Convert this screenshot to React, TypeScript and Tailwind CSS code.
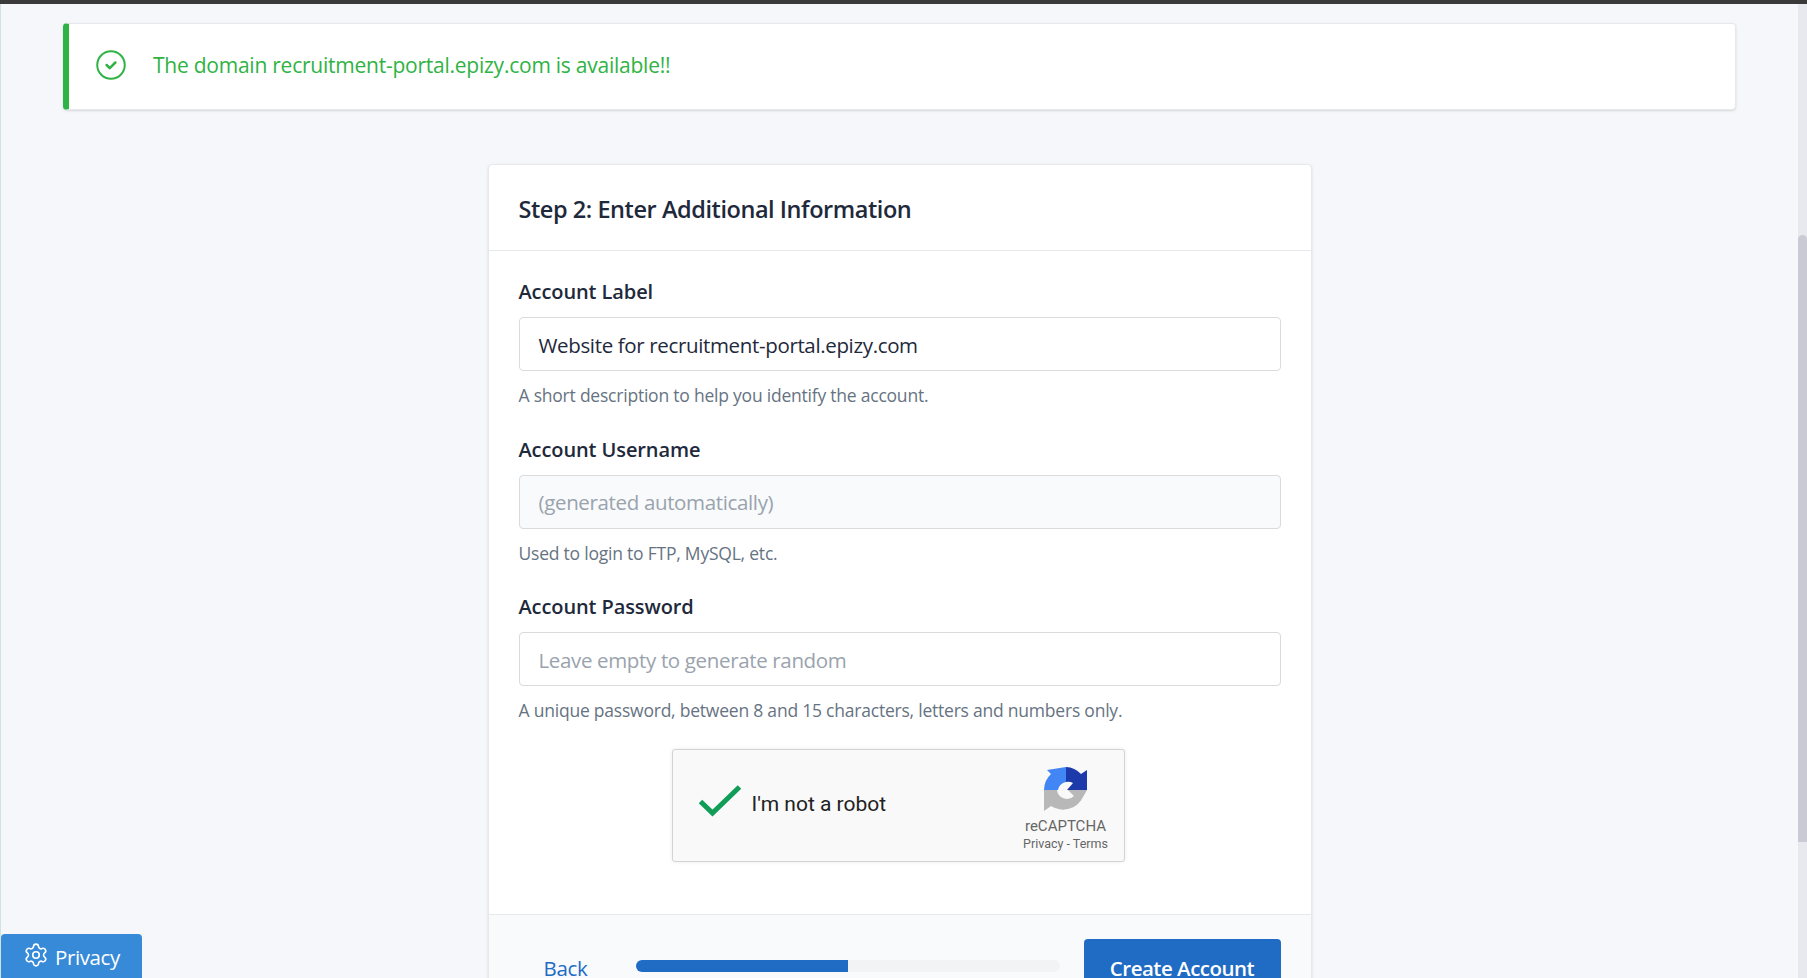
import { Settings } from 'lucide-react';

const font = "[font-family:'Open_Sans','Noto_Sans',sans-serif]";

function Field({ label, help, value, placeholder, disabled }: { label: string; help: string; value?: string; placeholder?: string; disabled?: boolean }) {
  return (
    <div className="mb-[31.5px]">
      <label className="block text-[20px] leading-[24px] font-semibold text-[#1e293b] tracking-[-0.1px] mb-[13px]">{label}</label>
      <div className={`h-[54px] rounded-[4px] border border-[#d9dbde] px-[19px] pt-[2px] flex items-center text-[20.5px] tracking-[-0.35px] ${disabled ? 'bg-[#f8fafc]' : 'bg-white'} ${value ? 'text-[#1e293b]' : 'text-[#9aa3ad]'}`}>
        {value ?? placeholder}
      </div>
      <p className="mt-[13px] text-[17.5px] leading-[22px] text-[#667382] tracking-[-0.22px]">{help}</p>
    </div>
  );
}

function RecaptchaLogo() {
  return (
    <svg viewBox="0 0 44 45" className="w-[44px] h-[45px]">
      <path d="M0 23 A22 22 0 0 1 7 7 L3 3 L22 0 L22 15 A10 10 0 0 0 14 23 Z" fill="#4285f4" />
      <path d="M22 0 A22 22 0 0 1 37 7 L43 3 L43 23 L23 23 L29 16 A10 10 0 0 0 22 15 Z" fill="#1c3aa9" />
      <path d="M0 23 L13 23 A10 10 0 0 0 30 29 L24 23 L43 23 L39 30 A22 22 0 0 1 7 39 L0 44 Z" fill="#b8b8b8" />
    </svg>
  );
}

export default function App() {
  return (
    <div className={`relative h-[978px] overflow-hidden bg-[#f5f7fb] flex flex-col ${font}`}>
      <div className="h-[4px] shrink-0 bg-[#3a3a3a]" />
      <div className="flex flex-1 min-h-0">
        <div className="w-px shrink-0 bg-[#cfe3e3]" />
        <main className="flex-1 min-w-0 px-[62px] pt-[19px]">
          <div className="h-[87px] rounded-[4px] bg-white border border-[#e6e8ec] border-l-[6px] border-l-[#2fb344] shadow-sm flex items-center pl-[27px]">
            <svg viewBox="0 0 24 24" fill="none" stroke="#2fb344" strokeWidth="1.6" strokeLinecap="round" strokeLinejoin="round" className="w-[30px] h-[30px] mb-[3px]">
              <circle cx="12" cy="12" r="11" />
              <path d="M8.5 12l2.5 2.5 4.5-4.5" strokeWidth="2" />
            </svg>
            <span className="ml-[27px] mb-[1px] text-[21px] font-medium text-[#2fb344] tracking-[-0.24px]">The domain recruitment-portal.epizy.com is available!!</span>
          </div>

          <div className="mt-[54px] mx-auto w-[824px] rounded-[4px] bg-white border border-[#e6e8ec] shadow-sm">
            <div className="h-[86px] px-[30px] pt-[4px] flex items-center border-b border-[#e6e8ec]">
              <h2 className="text-[23.5px] font-semibold text-[#1e293b] tracking-[-0.44px]">Step 2: Enter Additional Information</h2>
            </div>
            <div className="px-[30px] pt-[29px]">
              <Field label="Account Label" value="Website for recruitment-portal.epizy.com" help="A short description to help you identify the account." />
              <Field label="Account Username" placeholder="(generated automatically)" disabled help="Used to login to FTP, MySQL, etc." />
              <Field label="Account Password" placeholder="Leave empty to generate random" help="A unique password, between 8 and 15 characters, letters and numbers only." />
              <div className="ml-[153px] mt-[-4px] w-[453px] h-[113px] rounded-[3px] border border-[#d3d3d3] bg-[#f9f9f9] shadow-[0_0_4px_rgba(0,0,0,0.08)] flex items-center [font-family:Roboto,sans-serif]">
                <svg viewBox="0 0 42 32" className="ml-[26px] mb-[9px] w-[42px] h-[32px]" fill="none" stroke="#0f9d58" strokeWidth="5">
                  <path d="M1.5 16.5 L13.5 28 L40.5 2" />
                </svg>
                <span className="ml-[11px] text-[21px] text-[#222]">I'm not a robot</span>
                <div className="ml-auto w-[108px] mr-[4px] flex flex-col items-center pt-[9px] text-[#666]">
                  <RecaptchaLogo />
                  <span className="mt-[5px] text-[15px] leading-[18px]">reCAPTCHA</span>
                  <span className="text-[12.5px] leading-[17px]">Privacy - Terms</span>
                </div>
              </div>
            </div>
            <div className="mt-[52px] h-[200px] bg-[#f9fafc] border-t border-[#e6e8ec] px-[30px] pt-[25px] flex items-start">
              <span className="ml-[25px] mt-[13px] w-[92px] text-[20.5px] text-[#206bc4] tracking-[-0.35px]">Back</span>
              <div className="mt-[20px] w-[424px] h-[12px] rounded-full bg-[#f1f3f5] overflow-hidden">
                <div className="h-full w-1/2 bg-[#206bc4]" />
              </div>
              <button className="ml-auto -mt-[1px] w-[197px] h-[60px] rounded-[4px] bg-[#206bc4] text-white text-[20.5px] font-semibold tracking-[-0.5px]">Create Account</button>
            </div>
          </div>
        </main>
        <div className="relative w-[9px] shrink-0 bg-[#e8e9ee]">
          <div className="absolute top-[231px] left-0 right-0 h-[607px] rounded-t-[5px] bg-[#c9cad3]" />
        </div>
      </div>
      <div className="absolute left-px bottom-0 w-[141px] h-[44px] rounded-t-[4px] bg-[#378ad8] text-white flex items-start pt-[8px] pl-[22px] text-[20.5px] tracking-[-0.4px]">
        <Settings className="w-[26px] h-[26px] mr-[6px] shrink-0" strokeWidth={1.5} />
        <span>Privacy</span>
      </div>
    </div>
  );
}
